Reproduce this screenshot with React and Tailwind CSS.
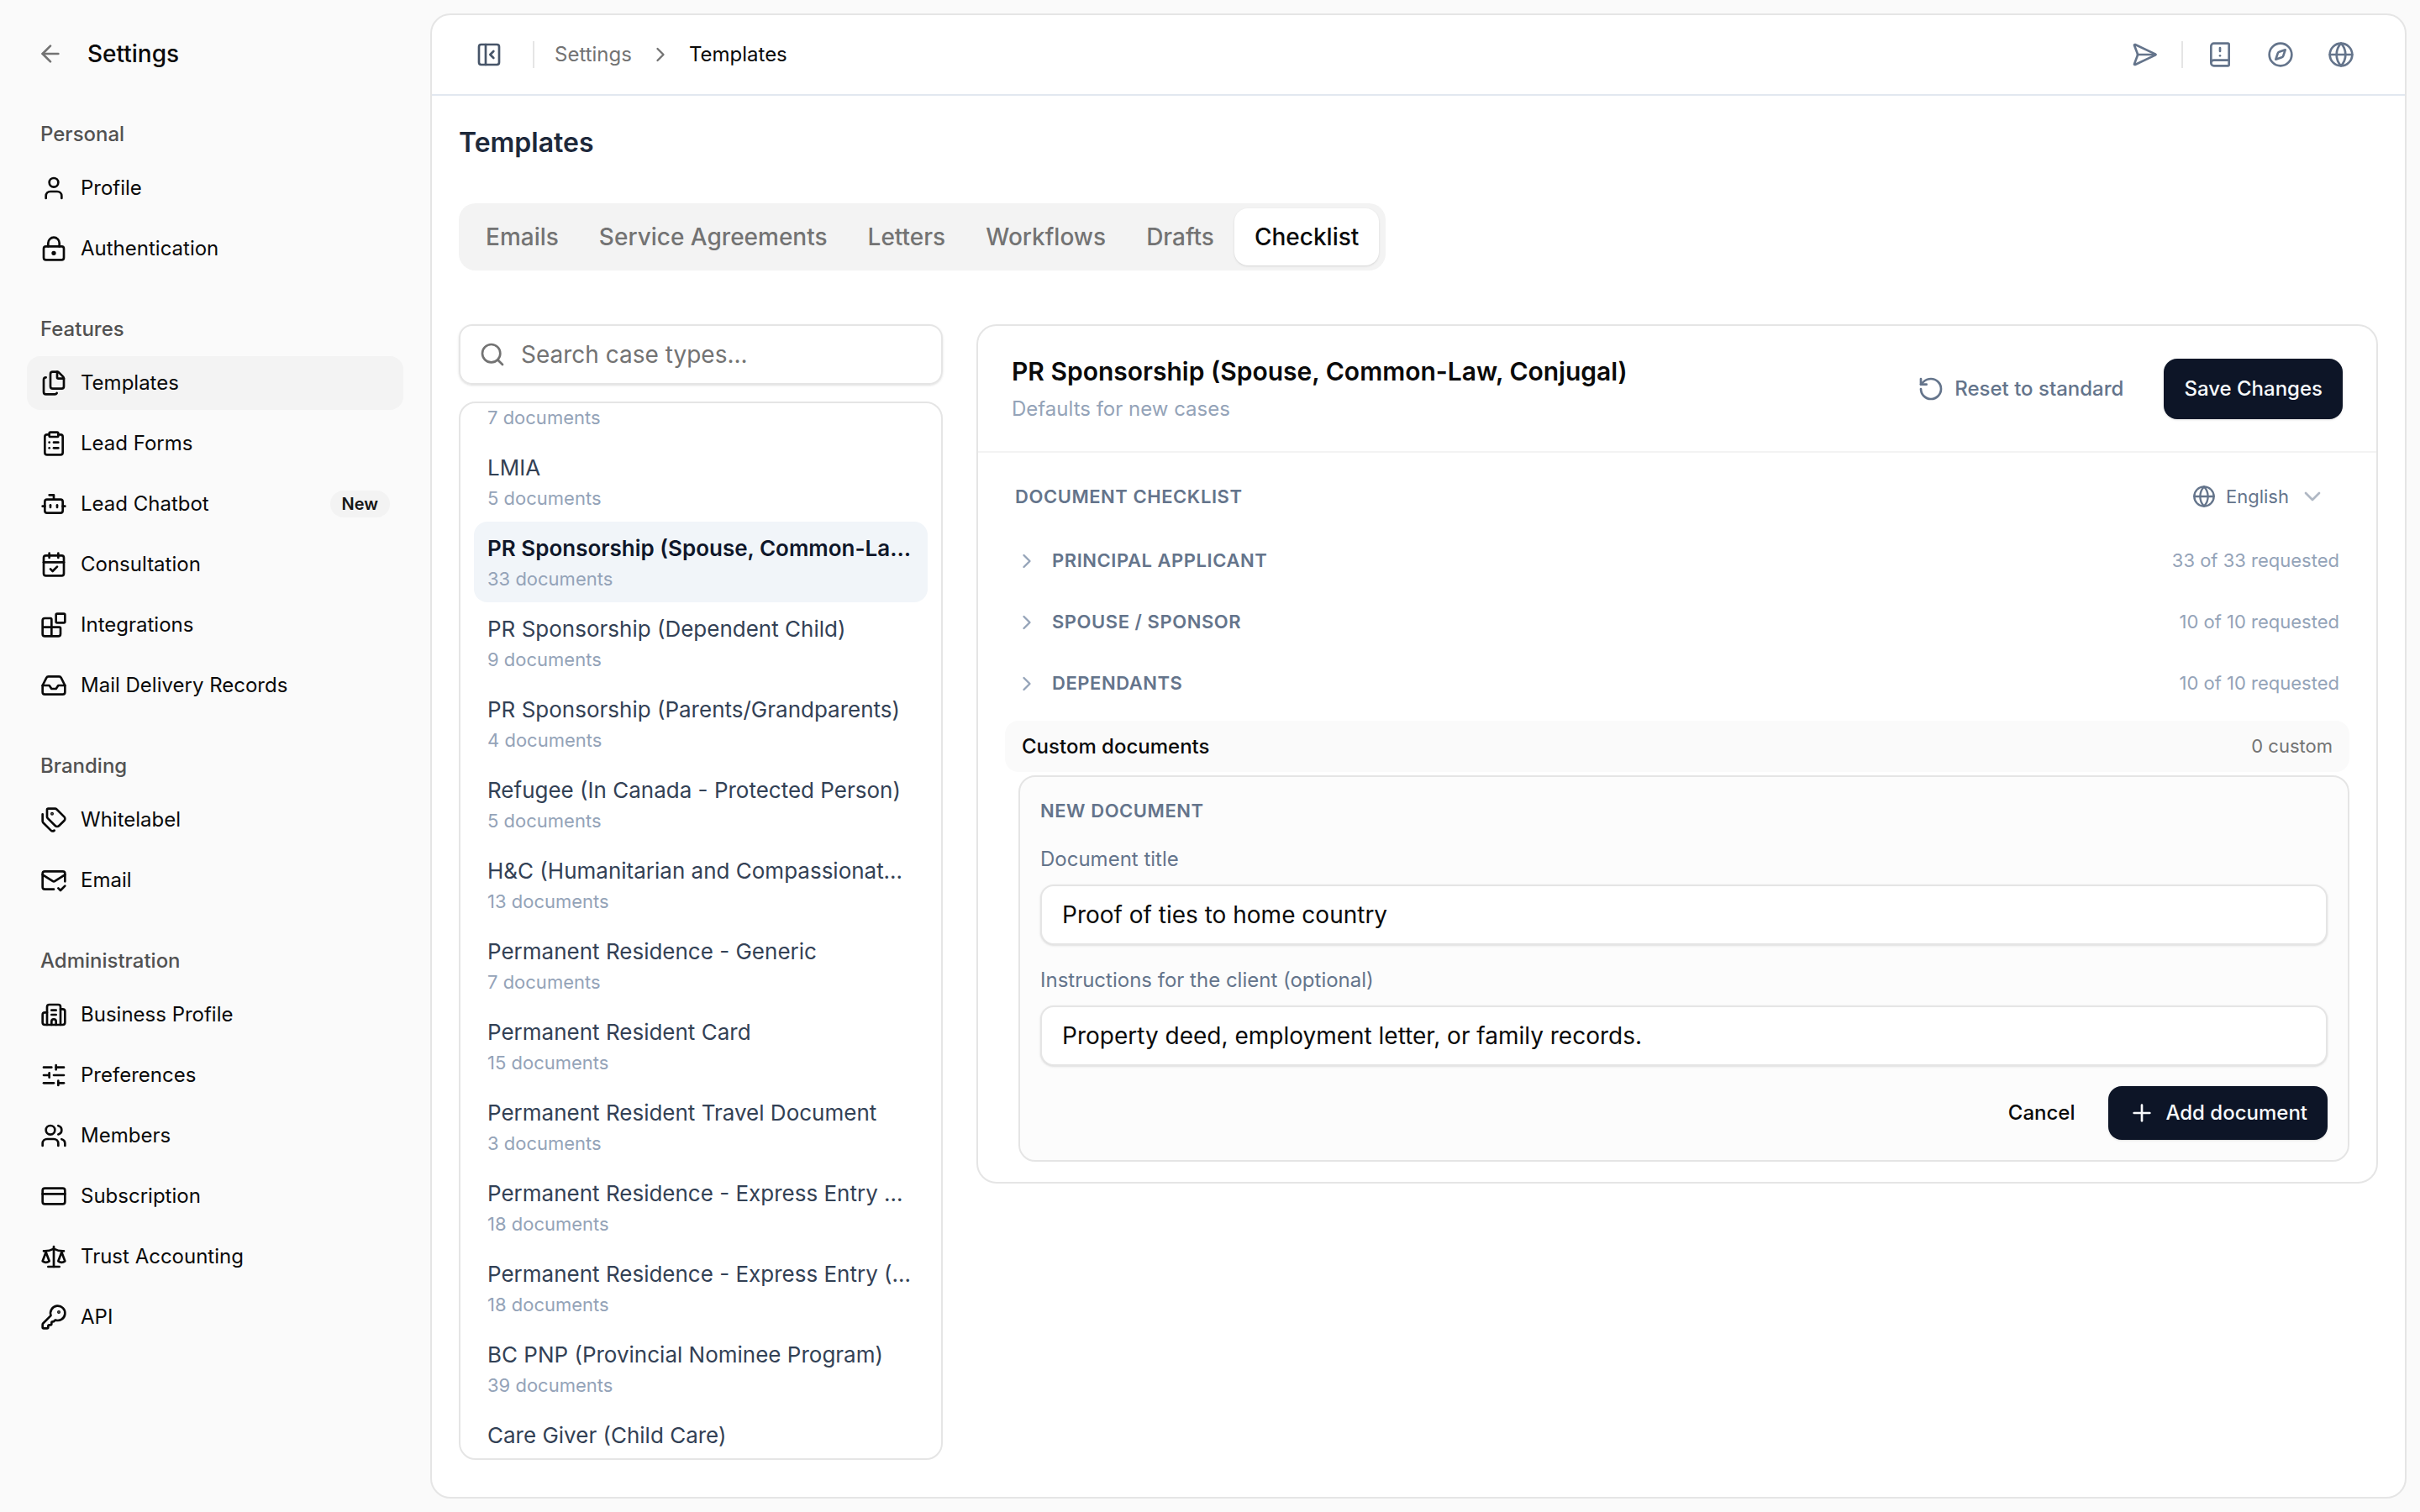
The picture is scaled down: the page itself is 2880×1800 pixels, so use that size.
import { useState } from 'react';
import {
  ArrowLeft,
  Blocks,
  BookAlert,
  Bot,
  CalendarCheck,
  ChevronDown,
  ChevronRight,
  ClipboardList,
  Compass,
  CreditCard,
  Files,
  Globe,
  Inbox,
  KeyRound,
  LockKeyhole,
  MailCheck,
  PanelLeftClose,
  Plus,
  RotateCcw,
  Scale,
  Search,
  SendHorizontal,
  SlidersHorizontal,
  Tags,
  User,
  Users,
} from 'lucide-react';

// Office block with two side wings
const BuildingIcon = ({ className }) => (
  <svg
    className={className}
    viewBox="0 0 24 24"
    fill="none"
    stroke="currentColor"
    strokeWidth="2"
    strokeLinecap="round"
    strokeLinejoin="round"
    aria-hidden="true"
  >
    <path d="M10 12h4" />
    <path d="M10 8h4" />
    <path d="M14 21v-3a2 2 0 0 0-4 0v3" />
    <path d="M6 10H4a2 2 0 0 0-2 2v7a2 2 0 0 0 2 2h16a2 2 0 0 0 2-2V9a2 2 0 0 0-2-2h-2" />
    <path d="M6 21V5a2 2 0 0 1 2-2h8a2 2 0 0 1 2 2v16" />
  </svg>
);

const navGroups = [
  {
    label: 'Personal',
    items: [
      { name: 'Profile', icon: User },
      { name: 'Authentication', icon: LockKeyhole },
    ],
  },
  {
    label: 'Features',
    items: [
      { name: 'Templates', icon: Files, active: true },
      { name: 'Lead Forms', icon: ClipboardList },
      { name: 'Lead Chatbot', icon: Bot, badge: 'New' },
      { name: 'Consultation', icon: CalendarCheck },
      { name: 'Integrations', icon: Blocks },
      { name: 'Mail Delivery Records', icon: Inbox },
    ],
  },
  {
    label: 'Branding',
    items: [
      { name: 'Whitelabel', icon: Tags },
      { name: 'Email', icon: MailCheck },
    ],
  },
  {
    label: 'Administration',
    items: [
      { name: 'Business Profile', icon: BuildingIcon },
      { name: 'Preferences', icon: SlidersHorizontal },
      { name: 'Members', icon: Users },
      { name: 'Subscription', icon: CreditCard },
      { name: 'Trust Accounting', icon: Scale },
      { name: 'API', icon: KeyRound },
    ],
  },
];

const tabs = ['Emails', 'Service Agreements', 'Letters', 'Workflows', 'Drafts', 'Checklist'];

const caseTypes = [
  { count: 7 },
  { name: 'LMIA', count: 5 },
  { name: 'PR Sponsorship (Spouse, Common-Law, Conjugal)', count: 33 },
  { name: 'PR Sponsorship (Dependent Child)', count: 9 },
  { name: 'PR Sponsorship (Parents/Grandparents)', count: 4 },
  { name: 'Refugee (In Canada - Protected Person)', count: 5 },
  { name: 'H&C (Humanitarian and Compassionate Grounds)', count: 13 },
  { name: 'Permanent Residence - Generic', count: 7 },
  { name: 'Permanent Resident Card', count: 15 },
  { name: 'Permanent Resident Travel Document', count: 3 },
  { name: 'Permanent Residence - Express Entry Profile', count: 18 },
  { name: 'Permanent Residence - Express Entry (FSW)', count: 18 },
  { name: 'BC PNP (Provincial Nominee Program)', count: 39 },
  { name: 'Care Giver (Child Care)' },
];

const sections = [
  { name: 'Principal Applicant', requested: '33 of 33 requested' },
  { name: 'Spouse / Sponsor', requested: '10 of 10 requested' },
  { name: 'Dependants', requested: '10 of 10 requested' },
];

const Sidebar = () => (
  <aside className="w-[512px] shrink-0 px-8 pt-8">
    <div className="flex h-16 items-center gap-7 px-3">
      <button type="button" aria-label="Back" className="text-[#737373]">
        <ArrowLeft className="size-8" />
      </button>
      <h2 className="text-[28px] font-medium">Settings</h2>
    </div>
    <nav className="mt-8 flex flex-col gap-8">
      {navGroups.map((group) => (
        <div key={group.label}>
          <h3 className="flex h-16 items-center px-4 text-[24px] font-medium text-[#525252]">{group.label}</h3>
          <ul className="flex flex-col gap-2">
            {group.items.map((item) => (
              <li key={item.name}>
                <a
                  href="#"
                  className={`flex h-16 items-center gap-4 rounded-2xl px-4 text-[24px] ${item.active ? 'bg-[#f3f3f3]' : ''}`}
                >
                  <item.icon className="size-8" />
                  <span>{item.name}</span>
                  {item.badge && (
                    <span className="ml-auto flex h-8 items-center rounded-full bg-[#f3f3f3] px-3.5 text-[20px] font-semibold text-[#171717]">
                      {item.badge}
                    </span>
                  )}
                </a>
              </li>
            ))}
          </ul>
        </div>
      ))}
    </nav>
  </aside>
);

const IconButton = ({ label, children }) => (
  <button type="button" aria-label={label} className="flex size-14 items-center justify-center">
    {children}
  </button>
);

const TopBar = () => (
  <header className="flex h-24 shrink-0 items-center justify-between border-b-2 border-[#e2e8f0] pl-10 pr-12">
    <div className="flex items-center text-[24px]">
      <span className="flex text-[#475569]">
        <IconButton label="Toggle sidebar">
          <PanelLeftClose className="size-8" />
        </IconButton>
      </span>
      <span className="mx-6 h-8 w-0.5 bg-[#e5e5e5]"></span>
      <a href="#" className="text-[#737373]">Settings</a>
      <ChevronRight className="mx-5 size-7 text-[#737373]" />
      <span>Templates</span>
    </div>
    <div className="flex items-center gap-4 text-[#64748b]">
      <IconButton label="Send">
        <SendHorizontal className="size-8" />
      </IconButton>
      <span className="h-8 w-0.5 bg-[#e5e5e5]"></span>
      <IconButton label="Guide">
        <BookAlert className="size-8" />
      </IconButton>
      <IconButton label="Explore">
        <Compass className="size-8" />
      </IconButton>
      <IconButton label="Language">
        <Globe className="size-8" />
      </IconButton>
    </div>
  </header>
);

const CaseTypeList = () => {
  const [selected, setSelected] = useState(2);

  return (
    <div className="flex min-h-0 w-[576px] shrink-0 flex-col gap-5">
      <label className="flex h-18 shrink-0 items-center gap-[18px] rounded-2xl border-2 border-[#e5e5e5] px-[22px] text-[#737373] shadow-sm">
        <Search className="size-8" />
        <input
          type="search"
          aria-label="Search case types"
          placeholder="Search case types..."
          className="min-w-0 flex-1 text-[28px] outline-none placeholder:text-[#737373]"
        />
      </label>
      <ul className="min-h-0 flex-1 overflow-y-auto rounded-[20px] border-2 border-[#e5e5e5] px-4 pt-px [scrollbar-width:none]">
        {caseTypes.map((item, index) => (
          <li key={index}>
            <button
              type="button"
              onClick={() => setSelected(index)}
              className={`block w-full rounded-2xl px-4 pb-3 text-left ${item.name ? 'pt-3' : ''} ${index === selected ? 'bg-[#f1f5f9]' : ''}`}
            >
              {item.name && (
                <span
                  className={`block truncate text-[26px] leading-10 ${index === selected ? 'font-semibold text-[#0f172a]' : 'text-[#334155]'}`}
                >
                  {item.name}
                </span>
              )}
              {item.count && <span className="block text-[22px] leading-8 text-[#94a3b8]">{item.count} documents</span>}
            </button>
          </li>
        ))}
      </ul>
    </div>
  );
};

const Field = ({ id, label, defaultValue }) => (
  <div className="flex flex-col gap-3">
    <label htmlFor={id} className="text-[24px] leading-9 text-[#64748b]">{label}</label>
    <input
      id={id}
      type="text"
      defaultValue={defaultValue}
      className="h-18 w-full rounded-2xl border-2 border-[#e5e5e5] bg-white px-6 text-[28px] shadow-sm outline-none"
    />
  </div>
);

const NewDocumentForm = () => (
  <form className="ml-4 mt-1 flex flex-col gap-6 rounded-[20px] border-2 border-[#e5e5e5] bg-[#fcfcfc] p-6">
    <h4 className="text-[22px] font-semibold uppercase leading-8 tracking-wide text-[#64748b]">New document</h4>
    <Field id="doc-title" label="Document title" defaultValue="Proof of ties to home country" />
    <Field
      id="doc-instructions"
      label="Instructions for the client (optional)"
      defaultValue="Property deed, employment letter, or family records."
    />
    <div className="flex justify-end gap-4 text-[24px] font-medium">
      <button type="button" className="h-16 px-6">Cancel</button>
      <button type="button" className="flex h-16 items-center gap-3 rounded-2xl bg-[#0d1527] px-6 text-[#f8fafc] shadow-sm">
        <Plus className="size-8" />
        Add document
      </button>
    </div>
  </form>
);

const ChecklistCard = () => (
  <section className="min-w-0 flex-1 self-start rounded-[24px] border-2 border-[#e5e5e5]">
    <div className="flex items-center justify-between border-b-2 border-[#f3f3f3] px-10 py-8">
      <div className="flex flex-col gap-1">
        <h2 className="text-[30px] font-semibold leading-11">PR Sponsorship (Spouse, Common-Law, Conjugal)</h2>
        <p className="text-[24px] leading-[37px] text-[#94a3b8]">Defaults for new cases</p>
      </div>
      <div className="flex items-center gap-6 text-[24px] font-medium">
        <button type="button" className="flex h-18 items-center gap-3 px-6 text-[#64748b]">
          <RotateCcw className="size-8" />
          Reset to standard
        </button>
        <button type="button" className="h-18 rounded-2xl bg-[#0d1527] px-6 text-[#f8fafc] shadow-sm">Save Changes</button>
      </div>
    </div>

    <div className="px-8 py-6">
      <div className="flex h-14 items-center justify-between pl-3 pr-7">
        <h3 className="text-[22px] font-semibold uppercase tracking-wide text-[#64748b]">Document checklist</h3>
        <label className="flex items-center text-[22px] text-[#64748b]">
          <Globe className="size-7" />
          <select aria-label="Language" className="ml-3 appearance-none outline-none">
            <option>English</option>
          </select>
          <ChevronDown className="ml-3 size-8 opacity-50" />
        </label>
      </div>

      <div className="mt-3">
        {sections.map((section) => (
          <button key={section.name} type="button" className="flex h-[73px] w-full items-center px-3 text-[22px]">
            <ChevronRight className="size-7 text-[#94a3b8]" />
            <span className="ml-4 font-semibold uppercase tracking-wide text-[#64748b]">{section.name}</span>
            <span className="ml-auto text-[#94a3b8]">{section.requested}</span>
          </button>
        ))}
      </div>

      <div className="mt-2 flex h-[61px] items-center justify-between rounded-2xl bg-[#fafafa] px-5">
        <h3 className="text-[24px] font-medium">Custom documents</h3>
        <span className="text-[22px] text-[#737373]">0 custom</span>
      </div>
      <NewDocumentForm />
    </div>
  </section>
);

const App = () => {
  const [activeTab, setActiveTab] = useState('Checklist');

  return (
    <div className="flex h-screen bg-[#fafafa] font-['Inter',sans-serif] text-[#0a0a0a]">
      <Sidebar />
      <main className="my-4 mr-4 flex min-w-0 flex-1 flex-col rounded-[24px] border-2 border-[#e5e5e5] bg-white">
        <TopBar />
        <div className="flex min-h-0 flex-1 flex-col px-8 pb-11 pt-8">
          <h1 className="text-[32px] font-semibold leading-12 text-[#1e293b]">Templates</h1>
          <div role="tablist" className="mt-12 flex h-20 shrink-0 self-start rounded-[20px] bg-[#f3f3f3] px-2 py-1.5">
            {tabs.map((tab) => (
              <button
                key={tab}
                type="button"
                role="tab"
                aria-selected={tab === activeTab}
                onClick={() => setActiveTab(tab)}
                className={`rounded-2xl px-6 text-[28px] font-medium ${tab === activeTab ? 'bg-white shadow-sm' : 'text-[#737373]'}`}
              >
                {tab}
              </button>
            ))}
          </div>
          <div className="mt-16 flex min-h-0 flex-1 gap-10">
            <CaseTypeList />
            <ChecklistCard />
          </div>
        </div>
      </main>
    </div>
  );
};

export default App;
